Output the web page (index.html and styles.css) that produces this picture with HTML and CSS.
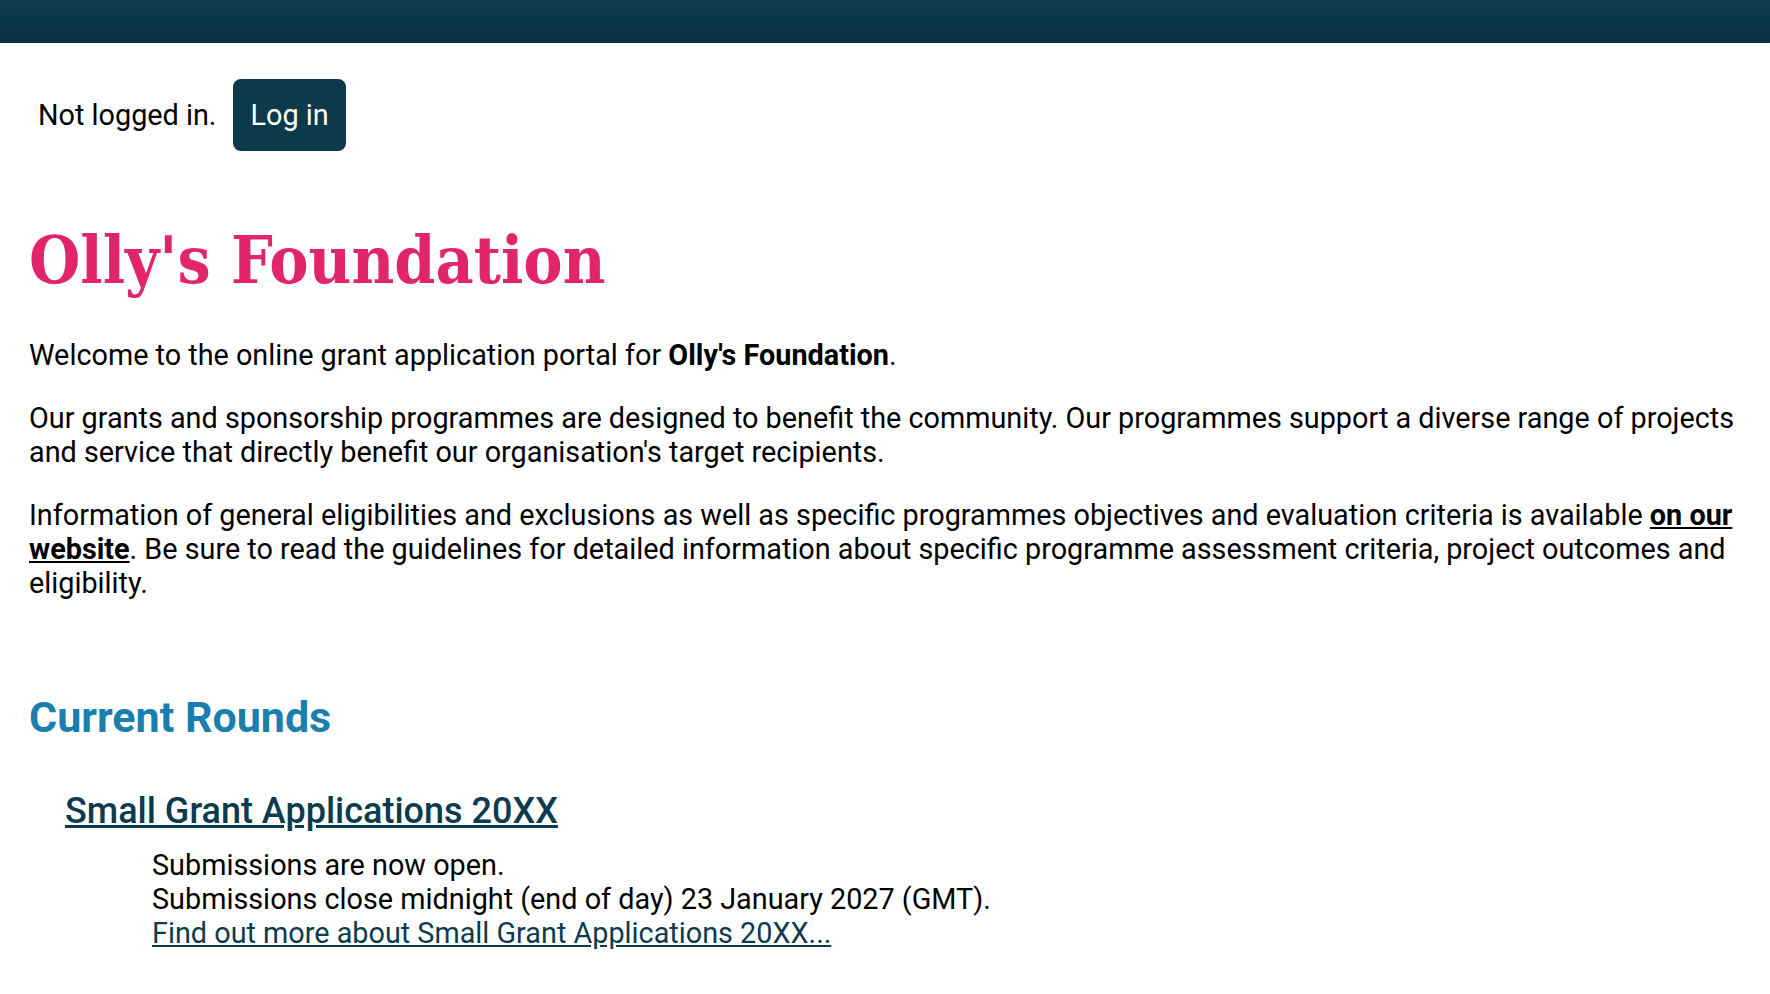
FILE: index.html
```html
<!DOCTYPE html>
<html lang="en">
<head>
    <meta charset="UTF-8">
    <meta name="viewport" content="width=device-width, initial-scale=1.0">
    <title>Olly's Foundation - Grant Applications</title>
    <link rel="stylesheet" href="styles.css">
</head>
<body>
    <div class="topbar"></div>

    <div class="login-bar">
        <span>Not logged in.</span>
        <a href="#" class="login-btn">Log in</a>
    </div>

    <main class="content">
        <h1 class="site-title">Olly's Foundation</h1>

        <p>Welcome to the online grant application portal for <strong>Olly's Foundation</strong>.</p>

        <p>Our grants and sponsorship programmes are designed to benefit the community. Our programmes support a diverse range of projects and service that directly benefit our organisation's target recipients.</p>

        <p>Information of general eligibilities and exclusions as well as specific programmes objectives and evaluation criteria is available <a href="#" class="strong-link">on our website</a>. Be sure to read the guidelines for detailed information about specific programme assessment criteria, project outcomes and eligibility.</p>

        <section class="rounds">
            <h2>Current Rounds</h2>
            <dl class="round-list">
                <dt><a href="#">Small Grant Applications 20XX</a></dt>
                <dd>
                    Submissions are now open.<br>
                    Submissions close midnight (end of day) 23 January 2027 (GMT).<br>
                    <a href="#">Find out more about Small Grant Applications 20XX...</a>
                </dd>
            </dl>
        </section>
    </main>
</body>
</html>
```

FILE: styles.css
```css
body {
    margin: 0;
    padding: 0;
    font-family: 'Roboto', 'Liberation Sans', sans-serif;
    font-size: 28.8px;
    line-height: 34px;
    color: #000;
    background: #fff;
}

.topbar {
    height: 43px;
    background: linear-gradient(180deg, #0e3c4e, #0a3040);
}

.login-bar {
    display: flex;
    align-items: baseline;
    gap: 17px;
    padding: 36px 0 0 38px;
}

.login-btn {
    display: inline-block;
    padding: 19px 17px;
    border-radius: 8px;
    background: #0c3a4b;
    color: #fff;
    text-decoration: none;
}

.content {
    padding: 0 29px;
}

.site-title {
    margin: 70px 0 38px;
    font-family: 'DejaVu Serif Condensed', 'DejaVu Serif', serif;
    font-stretch: condensed;
    font-size: 65.5px;
    line-height: 1.2;
    font-weight: bold;
    color: #e0256a;
}

.content p {
    margin: 0 0 29px;
}

.strong-link {
    color: #000;
    font-weight: bold;
}

.rounds h2 {
    margin: 92px 0 47px;
    font-size: 43px;
    line-height: 1.2;
    font-weight: bold;
    color: #1a7fad;
}

.round-list {
    margin: 0;
}

.round-list dt {
    margin: 0 0 15px 36px;
    font-size: 36px;
    line-height: 1.2;
    font-weight: 500;
}

.round-list dt a,
.round-list dd a {
    color: #0c3b4d;
}

.round-list dd {
    margin: 0 0 0 123px;
}
```
